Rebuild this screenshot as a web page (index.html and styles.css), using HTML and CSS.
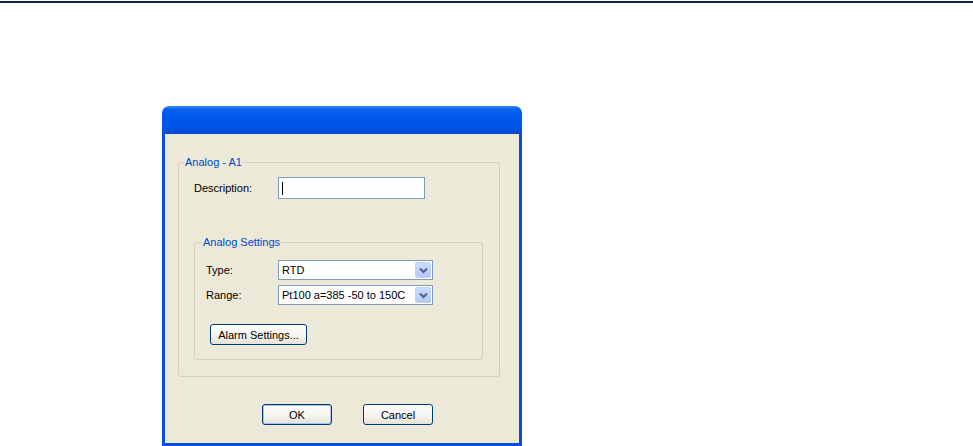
FILE: index.html
```html
<!DOCTYPE html>
<html lang="en">
<head>
  <meta charset="UTF-8">
  <title>Analog - A1</title>
  <link rel="stylesheet" href="styles.css">
</head>
<body>
  <div class="topline"></div>
  <div class="window">
    <div class="titlebar"></div>
    <div class="client">
      <fieldset class="group outer">
        <legend>Analog - A1</legend>
        <div class="row desc-row">
          <label>Description:</label>
          <div class="textbox"><span class="caret"></span></div>
        </div>
        <fieldset class="group inner">
          <legend>Analog Settings</legend>
          <div class="row">
            <label>Type:</label>
            <div class="combo">
              <span class="value">RTD</span>
              <span class="drop"><svg width="9" height="7" viewBox="0 0 9 7"><path d="M1 1.5 L4.5 5 L8 1.5" fill="none" stroke="#4d6185" stroke-width="2"/></svg></span>
            </div>
          </div>
          <div class="row">
            <label>Range:</label>
            <div class="combo">
              <span class="value">Pt100 a=385 -50 to 150C</span>
              <span class="drop"><svg width="9" height="7" viewBox="0 0 9 7"><path d="M1 1.5 L4.5 5 L8 1.5" fill="none" stroke="#4d6185" stroke-width="2"/></svg></span>
            </div>
          </div>
          <button class="btn alarm">Alarm Settings...</button>
        </fieldset>
      </fieldset>
      <div class="actions">
        <button class="btn ok">OK</button>
        <button class="btn">Cancel</button>
      </div>
    </div>
  </div>
</body>
</html>
```

FILE: styles.css
```css
body {
  margin: 0;
  background: #fff;
  font-family: "Liberation Sans", Arial, sans-serif;
  font-size: 11px;
  color: #000;
}

.topline {
  height: 2px;
  margin-top: 1px;
  background: #0e2756;
}

.window {
  width: 360px;
  margin: 103px 0 0 162px;
}

.titlebar {
  height: 28px;
  border-radius: 7px 7px 0 0;
  background: linear-gradient(to bottom, #3d8ef9 0, #0a62ec 3px, #0058ee 35%, #0055e8 75%, #0848d4 100%);
}

.client {
  box-sizing: border-box;
  height: 312px;
  border: 3px solid #0a4fdb;
  border-top: 0;
  background: #ece9d8;
  padding: 22px 19px 0 13px;
}

/* group boxes */
.group {
  margin: 0;
  min-width: 0;
  border: 1px solid #d0d0bf;
  border-radius: 3px;
}

.group legend {
  padding: 0 1px;
  line-height: 13px;
  color: #0046d5;
}

.outer {
  padding: 8px 0 16px 0;
}
.outer > legend { margin-left: 5px; }

.inner {
  margin: 37px 16px 0 15px;
  padding: 11px 0 14px 0;
}
.inner > legend { margin-left: 7px; }

.row {
  display: flex;
  align-items: center;
}

.desc-row { margin-left: 15px; }
.desc-row label { width: 84px; }

.inner .row { margin-left: 11px; }
.inner .row + .row { margin-top: 5px; }
.inner .row label { width: 72px; }

.textbox {
  box-sizing: border-box;
  width: 147px;
  height: 22px;
  border: 1px solid #7f9db9;
  background: #fff;
  display: flex;
  align-items: center;
}

.caret {
  width: 1px;
  height: 13px;
  margin-left: 3px;
  background: #000;
}

.combo {
  box-sizing: border-box;
  width: 155px;
  height: 20px;
  border: 1px solid #7f9db9;
  background: #fff;
  display: flex;
  align-items: center;
  justify-content: space-between;
}

.combo .value { padding-left: 3px; }

.drop {
  box-sizing: border-box;
  width: 16px;
  height: 16px;
  margin-right: 1px;
  border: 1px solid #bfd0fb;
  border-radius: 2px;
  background: linear-gradient(to bottom, #cbdafd, #b5c8f6);
  display: flex;
  align-items: center;
  justify-content: center;
}

/* buttons */
.btn {
  box-sizing: border-box;
  height: 21px;
  padding: 0;
  font: inherit;
  color: #000;
  border: 1px solid #003c74;
  border-radius: 3px;
  background: linear-gradient(to bottom, #fff 0, #f5f4ef 55%, #e4e2d8 100%);
}

.alarm {
  display: block;
  width: 97px;
  margin: 19px 0 0 15px;
}

.actions {
  display: flex;
  gap: 31px;
  margin-top: 27px;
  padding-left: 84px;
}

.actions .btn { width: 70px; }

.ok {
  box-shadow: inset 0 0 0 1px #a9c1ef;
}
```
